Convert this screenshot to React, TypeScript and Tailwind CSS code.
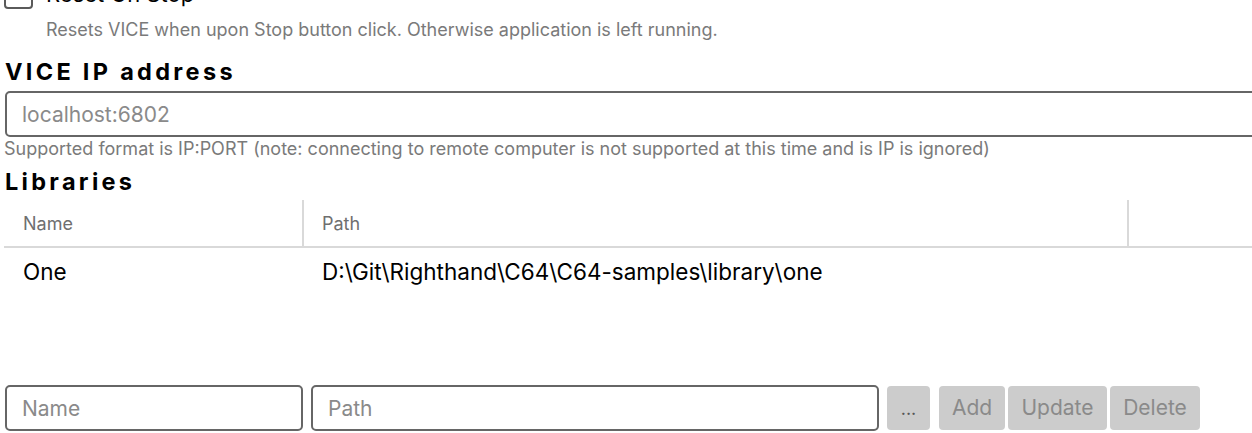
import { useState } from "react"

interface LibraryType {
    name: string,
    path: string,
}

const libraries: LibraryType[] = [
    { name: "One", path: "D:\\Git\\Righthand\\C64\\C64-samples\\library\\one" },
]

const Settings = () => {
    const [resetOnStop, setResetOnStop] = useState(false)

    return (
        <div className="w-[1252px] h-[433px] overflow-hidden bg-white font-['Inter',sans-serif] text-black">
            <div className="w-[1290px] -mt-[20px] pl-[4px]">
                <label className="flex items-center h-[29px]">
                    <input
                        type="checkbox"
                        checked={resetOnStop}
                        onChange={(e) => setResetOnStop(e.target.checked)}
                        className="appearance-none w-[29px] h-[29px] border-2 border-[#5a5a5a] rounded-[4px] bg-white m-0"
                    />
                    <span className="ml-[13px] text-[22px]">Reset On Stop</span>
                </label>
                <p className="mt-[10px] ml-[42px] text-[18px] leading-[22px] text-[#7a7a7a]">Resets VICE when upon Stop button click. Otherwise application is left running.</p>

                <h2 className="mt-[16px] ml-[1px] text-[23.5px] leading-[30px] font-bold tracking-[3.3px]">VICE IP address</h2>
                <input
                    type="text"
                    placeholder="localhost:6802"
                    className="mt-[4px] ml-[1px] block w-[1280px] h-[46px] border-2 border-[#666] rounded-[5px] px-[15px] text-[21px] outline-none placeholder:text-[#8a8a8a]"
                />
                <p className="mt-[1px] text-[18px] leading-[22px] text-[#7a7a7a]">Supported format is IP:PORT (note: connecting to remote computer is not supported at this time and is IP is ignored)</p>

                <h2 className="mt-[7px] ml-[1px] text-[23.5px] leading-[30px] font-bold tracking-[3.3px]">Libraries</h2>
                <table className="mt-[3px] w-[1280px] border-collapse table-fixed">
                    <colgroup>
                        <col className="w-[299px]" />
                        <col className="w-[825px]" />
                        <col />
                    </colgroup>
                    <thead>
                        <tr className="h-[47px] border-b-2 border-[#d9d9d9]">
                            <th className="text-left font-normal text-[18px] text-[#6f6f6f] pl-[19px]">Name</th>
                            <th className="text-left font-normal text-[18px] text-[#6f6f6f] pl-[18px] border-l-2 border-[#d9d9d9]">Path</th>
                            <th className="border-l-2 border-[#d9d9d9]"></th>
                        </tr>
                    </thead>
                    <tbody>
                        {libraries.map((library, index) => (
                            <tr key={index} className="h-[48px]">
                                <td className="pl-[19px] text-[22.5px]">{library.name}</td>
                                <td className="pl-[19px] text-[22.5px]" colSpan={2}>{library.path}</td>
                            </tr>
                        ))}
                    </tbody>
                </table>

                <div className="mt-[90px] ml-[1px] flex items-center">
                    <input
                        type="text"
                        placeholder="Name"
                        className="w-[298px] h-[46px] border-2 border-[#666] rounded-[5px] px-[15px] text-[21px] outline-none placeholder:text-[#8a8a8a]"
                    />
                    <input
                        type="text"
                        placeholder="Path"
                        className="ml-[8px] w-[568px] h-[46px] border-2 border-[#666] rounded-[5px] px-[15px] text-[21px] outline-none placeholder:text-[#8a8a8a]"
                    />
                    <button className="ml-[8px] w-[43px] h-[44px] rounded-[4px] bg-[#cccccc] text-[18px] text-[#555]">...</button>
                    <button className="ml-[9px] w-[66px] h-[44px] rounded-[4px] bg-[#cccccc] text-[21px] text-[#8a8a8a]">Add</button>
                    <button className="ml-[3px] w-[99px] h-[44px] rounded-[4px] bg-[#cccccc] text-[21px] text-[#8a8a8a]">Update</button>
                    <button className="ml-[3px] w-[90px] h-[44px] rounded-[4px] bg-[#cccccc] text-[21px] text-[#8a8a8a]">Delete</button>
                </div>
            </div>
        </div>
    )
}

export default Settings
